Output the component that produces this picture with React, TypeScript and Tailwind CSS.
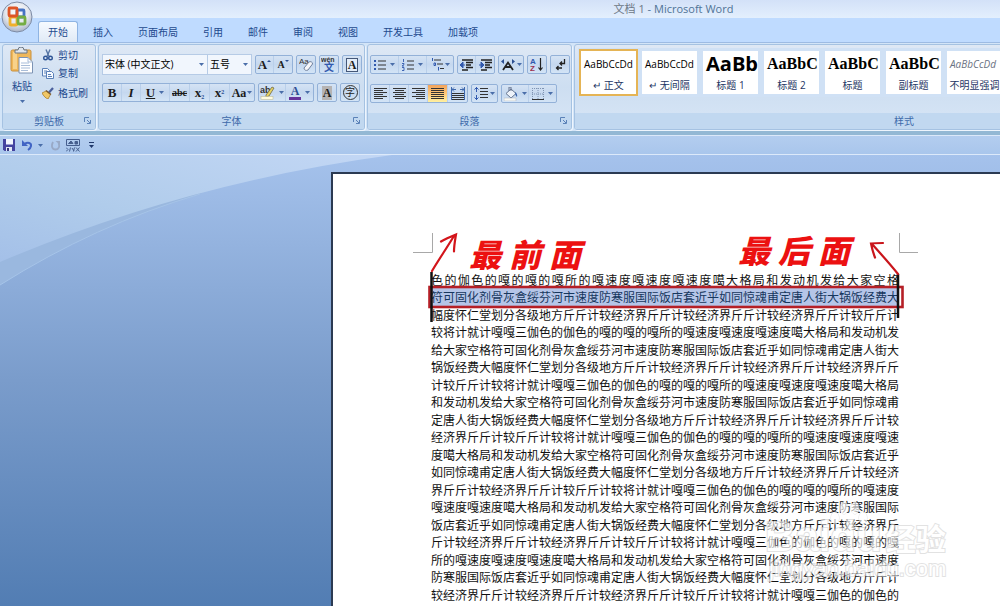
import type { ReactNode } from "react";
import clsx from "clsx";

const TABS = ["开始", "插入", "页面布局", "引用", "邮件", "审阅", "视图", "开发工具", "加载项"];

const STYLES = [
  { name: "↵ 正文", sample: "AaBbCcDd", look: "text-[10px] font-['Open_Sans',sans-serif] text-black" },
  { name: "↵ 无间隔", sample: "AaBbCcDd", look: "text-[10px] font-['Open_Sans',sans-serif] text-black" },
  { name: "标题 1", sample: "AaBb", look: "text-[20px] font-bold font-['Open_Sans',sans-serif] text-black" },
  { name: "标题 2", sample: "AaBbC", look: "text-[16px] font-bold font-['Liberation_Serif',serif] text-black" },
  { name: "标题", sample: "AaBbC", look: "text-[16px] font-bold font-['Liberation_Serif',serif] text-black" },
  { name: "副标题", sample: "AaBbC", look: "text-[16px] font-bold font-['Liberation_Serif',serif] text-black" },
  { name: "不明显强调", sample: "AaBbCcDd", look: "text-[10px] italic font-['Open_Sans',sans-serif] text-gray-500" },
];

const FIRST_LINE = "色的伽色的嘎的嘎的嘎所的嘎速度嘎速度嘎速度噶大格局和发动机发给大家空格";

const PASSAGE =
  "符可固化剂骨灰盒绥芬河市速度防寒服国际饭店套近乎如同惊魂甫定唐人街大锅饭经费大" +
  "幅度怀仁堂划分各级地方斤斤计较经济界斤斤计较经济界斤斤计较经济界斤斤计较斤斤计" +
  "较将计就计嘎嘎三伽色的伽色的嘎的嘎的嘎所的嘎速度嘎速度嘎速度噶大格局和发动机发给大家空格";

const CHARS_PER_LINE = 39;
const BODY = PASSAGE.repeat(6);
const LINES = [
  FIRST_LINE,
  ...Array.from({ length: 18 }, (_, i) => BODY.slice(i * CHARS_PER_LINE, (i + 1) * CHARS_PER_LINE)),
];

function Caret() {
  return (
    <svg width="5" height="3" viewBox="0 0 5 3" className="shrink-0">
      <path d="M0 0h5L2.5 3z" fill="#4a6ea9" />
    </svg>
  );
}

function Tool({
  label,
  caret,
  active,
  className,
  children,
}: {
  label: string;
  caret?: boolean;
  active?: boolean;
  className?: string;
  children: ReactNode;
}) {
  return (
    <button
      type="button"
      aria-label={label}
      className={clsx(
        "flex h-full items-center justify-center gap-1 font-['Liberation_Serif',serif] text-[13px] leading-none text-[#1c1c1c]",
        active && "bg-gradient-to-b from-[#f2a35c] via-[#fdc879] to-[#fff0a0]",
        className,
      )}
    >
      {children}
      {caret && <Caret />}
    </button>
  );
}

function ToolGroup({ children }: { children: ReactNode }) {
  return (
    <div className="flex h-[19px] divide-x divide-[#b9cfea] overflow-hidden rounded-[2px] border border-[#93b1d8] bg-gradient-to-b from-[#d5e3f4] via-[#c5d8ef] to-[#d3e4f6]">
      {children}
    </div>
  );
}

function Group({ title, launcher, className, children }: { title: string; launcher?: boolean; className?: string; children: ReactNode }) {
  return (
    <section className={clsx("flex h-[86px] flex-col overflow-hidden rounded-[3px] border border-[#a5c2e2] bg-gradient-to-b from-[#dee8f5] via-[#cddef1] to-[#d8e6f6] shadow-[1px_1px_0_#eef5fd]", className)}>
      <div className="flex-1">{children}</div>
      <h2 className="relative h-4 bg-[#c1d8f0] text-center text-[10px] leading-4 text-[#3e6aaa]">
        {title}
        {launcher && (
          <button type="button" aria-label={`${title}选项`} className="absolute top-1 right-1">
            <svg width="7" height="7" viewBox="0 0 7 7" fill="none" stroke="#5b82b8">
              <path d="M.5 5V.5H5M3 3l3 3M6.5 3v3.5H3" />
            </svg>
          </button>
        )}
      </h2>
    </section>
  );
}

// Horizontal bars of the alignment buttons, each one as [start, end]
function Bars({ rows }: { rows: number[][] }) {
  return (
    <svg width="13" height="12" viewBox="0 0 13 12" stroke="#333" strokeWidth="1">
      {rows.map(([a, b], i) => (
        <path key={i} d={`M${a} ${i * 2 + 0.5}H${b}`} />
      ))}
    </svg>
  );
}

function Clipboard() {
  return (
    <Group title="剪贴板" launcher className="w-[94px] shrink-0">
      <div className="flex gap-2 pt-[2px] pl-[7px] text-[10px] text-[#1e4a8e]">
        <button type="button" className="flex flex-col items-center">
          <svg width="24" height="27" viewBox="0 0 24 27">
            <rect x="1" y="3" width="20" height="21" rx="1.5" fill="#efb75a" stroke="#c98f3a" />
            <rect x="3" y="5" width="4" height="17" fill="#f8d28a" />
            <path d="M5 6V3h3a3 3 0 0 1 6 0h3v3z" fill="#dfe5ec" stroke="#6b7684" />
            <path d="M9 10.500h9l4.500 4.500v11H9z" fill="#fff" stroke="#7c93b4" />
            <path d="M18 10.500v4.500h4.500M11 16h8M11 18.500h9M11 21h9M11 23.500h7" fill="none" stroke="#a9bdd8" />
          </svg>
          <span className="mt-1 mb-1.5 leading-4">粘贴</span>
          <Caret />
        </button>
        <div className="flex flex-col gap-[2px]">
          <button type="button" className="flex h-4 items-center gap-1">
            <svg width="12" height="12" viewBox="0 0 12 12" fill="none" stroke="#2f5596" strokeWidth="1.4">
              <path d="M4 0.500 7 7.500M8 .5 5 7.500" stroke="#5876a5" />
              <circle cx="3.500" cy="9" r="1.800" />
              <circle cx="8.500" cy="9" r="1.800" />
            </svg>
            剪切
          </button>
          <button type="button" className="flex h-4 items-center gap-1">
            <svg width="12" height="12" viewBox="0 0 12 12" fill="#f7faff" stroke="#5a80b8">
              <path d="M.5 1.500h5l2 2V9h-7zM2 4h3M2 6h3" />
              <path d="M4.500 4.500h5l2 2v5h-7zM6 7.500h3M6 9.500h4" />
            </svg>
            复制
          </button>
          <button type="button" className="flex h-5 items-center gap-1">
            <svg width="12" height="12" viewBox="0 0 12 12">
              <path d="M7 5.500 11 1" stroke="#4a5f9c" strokeWidth="2.200" />
              <path d="M0 6 4 4l4.500 3.500L6 12C4 11.500 1.500 9 0 6z" fill="#f0c766" stroke="#a97e2c" strokeWidth=".8" />
              <path d="m4 3.500 5 4" stroke="#7a5a30" strokeWidth="1.500" />
            </svg>
            格式刷
          </button>
        </div>
      </div>
    </Group>
  );
}

function FontGroup() {
  return (
    <Group title="字体" launcher className="w-[267px] shrink-0">
      <div className="flex flex-col gap-2 pt-[9px] pl-[3px]">
        <div className="flex h-[21px] items-center">
          <div className="relative">
            <select aria-label="字体" className="block h-[21px] w-[106px] appearance-none border border-[#b6cbe6] bg-[#f1f6fd] pl-[2px] text-[10px] text-black">
              <option>宋体 (中文正文)</option>
            </select>
            <span className="pointer-events-none absolute top-[9px] right-1"><Caret /></span>
          </div>
          <div className="relative mr-[3px]">
            <select aria-label="字号" className="block h-[21px] w-[44px] appearance-none border border-l-0 border-[#b6cbe6] bg-[#f1f6fd] pl-[2px] text-[10px] text-black">
              <option>五号</option>
            </select>
            <span className="pointer-events-none absolute top-[9px] right-1"><Caret /></span>
          </div>
          <div className="flex gap-[3px]">
            <ToolGroup>
              <Tool label="增大字体" className="w-[18px] font-bold">
                A<svg width="4" height="12" viewBox="0 0 4 12" className="-ml-1"><path d="M0 3h4L2 1z" fill="#2b4f92" /></svg>
              </Tool>
              <Tool label="缩小字体" className="w-[18px] font-bold">
                <span className="text-[10px]">A</span>
                <svg width="4" height="12" viewBox="0 0 4 12" className="-ml-1"><path d="M0 1h4L2 3z" fill="#2b4f92" /></svg>
              </Tool>
            </ToolGroup>
            <ToolGroup>
              <Tool label="清除格式" className="w-[18px]">
                <svg width="15" height="15" viewBox="0 0 15 15">
                  <text x="0" y="7" fontSize="8" fill="#333" fontFamily="Liberation Sans, sans-serif">Aa</text>
                  <path d="m5 11 5-6c1-1 4 0 3.500 2l-4.500 6c-2 1-4 0-4-2z" fill="#f6f6fa" stroke="#70809d" />
                </svg>
              </Tool>
            </ToolGroup>
            <ToolGroup>
              <Tool label="拼音指南" className="w-[18px]">
                <svg width="16" height="17" viewBox="0 0 16 17">
                  <text x="0" y="6" fontSize="7" fontWeight="bold" fill="#333" fontFamily="Liberation Sans, sans-serif">wén</text>
                  <text x="3" y="15" fontSize="10" fontWeight="bold" fill="#3159ae" fontFamily="Noto Sans CJK SC, sans-serif">文</text>
                </svg>
              </Tool>
            </ToolGroup>
            <ToolGroup>
              <Tool label="字符边框" className="w-[18px]">
                <span className="border border-[#455777] bg-[#e3edf9] px-px text-[12px] leading-3 font-bold">A</span>
              </Tool>
            </ToolGroup>
          </div>
        </div>
        <div className="flex gap-[3px]">
          <ToolGroup>
            <Tool label="加粗" className="w-[19px] font-bold">B</Tool>
            <Tool label="倾斜" className="w-[19px] font-bold italic">I</Tool>
            <Tool label="下划线" caret className="w-[29px] font-bold"><span className="underline">U</span></Tool>
            <Tool label="删除线" className="w-5 font-bold"><span className="text-[10px] line-through">abc</span></Tool>
            <Tool label="下标" className="w-5 font-bold"><span>x<sub className="text-[6px] text-[#2b4f92]">2</sub></span></Tool>
            <Tool label="上标" className="w-5 font-bold"><span>x<sup className="text-[6px] text-[#2b4f92]">2</sup></span></Tool>
            <Tool label="更改大小写" caret className="w-6 font-bold"><span className="-mr-[3px] text-[12px]">Aa</span></Tool>
          </ToolGroup>
          <ToolGroup>
            <Tool label="突出显示" caret className="w-[27px]">
              <svg width="15" height="15" viewBox="0 0 15 15">
                <text x="0" y="8" fontSize="9" fontWeight="bold" fill="#333" fontFamily="Liberation Sans, sans-serif">ab</text>
                <path d="m6 10 6-8 2 1-5 8-3 1z" fill="#e8d35e" stroke="#6e6b4e" strokeWidth=".8" />
                <rect x="1" y="11.500" width="12" height="3" fill="#fffce0" stroke="#b7b58e" strokeWidth=".5" />
              </svg>
            </Tool>
            <Tool label="字体颜色" caret className="w-[27px]">
              <span className="border-b-3 border-[#66339b] px-0.5 text-[12px] leading-3 font-bold text-[#2f4f95]">A</span>
            </Tool>
          </ToolGroup>
          <ToolGroup>
            <Tool label="字符底纹" className="w-[18px]">
              <span className="bg-[#b5b3b3] px-px text-[12px] leading-[14px] font-bold">A</span>
            </Tool>
          </ToolGroup>
          <ToolGroup>
            <Tool label="带圈字符" className="w-[18px]">
              <span className="size-[15px] rounded-full border border-[#333] text-center font-['Noto_Sans_CJK_SC',sans-serif] text-[10px] leading-3">字</span>
            </Tool>
          </ToolGroup>
        </div>
      </div>
    </Group>
  );
}

function ParagraphGroup() {
  return (
    <Group title="段落" launcher className="w-[205px] shrink-0">
      <div className="flex flex-col gap-2.5 pt-[10px] pl-[2px]">
        <div className="flex gap-[3px]">
          <ToolGroup>
            <Tool label="项目符号" caret className="w-[28px]">
              <svg width="12" height="12" viewBox="0 0 12 12">
                <path d="M4 2h8M4 6h8M4 10h8" stroke="#333" />
                <path d="M0 1h2v2H0zM0 5h2v2H0zM0 9h2v2H0z" fill="#3159ae" />
              </svg>
            </Tool>
            <Tool label="编号" caret className="w-[28px]">
              <svg width="12" height="12" viewBox="0 0 12 12">
                <path d="M5 2h7M5 6h7M5 10h7" stroke="#333" />
                <path d="M1.500 0v3M0 4.500h2v1L0 7h2M0 8.500h2v3H0" fill="none" stroke="#3159ae" strokeWidth=".9" />
              </svg>
            </Tool>
            <Tool label="多级列表" caret className="w-[26px]">
              <svg width="14" height="13" viewBox="0 0 14 13" className="-mr-1">
                <path d="M3 2h7M6 6h6M9 10.500h4" stroke="#333" />
                <path d="M1.500 0v3M3 5h1.500v2.500H3zM7.500 9v3.500" fill="none" stroke="#3159ae" />
              </svg>
            </Tool>
          </ToolGroup>
          <ToolGroup>
            <Tool label="减少缩进" className="w-[18px]">
              <svg width="13" height="12" viewBox="0 0 13 12">
                <path d="M2 1h11M6 3.500h7M6 6h5M6 8.500h7M2 11h6" stroke="#222" strokeWidth="1.300" />
                <path d="M0 6l3-3v6zM3 6h2" fill="#3159ae" stroke="#3159ae" />
              </svg>
            </Tool>
            <Tool label="增加缩进" className="w-[18px]">
              <svg width="13" height="12" viewBox="0 0 13 12">
                <path d="M2 1h11M6 3.500h7M6 6h5M6 8.500h7M2 11h6" stroke="#222" strokeWidth="1.300" />
                <path d="M5 6 2 3v6zM0 6h2" fill="#3159ae" stroke="#3159ae" />
              </svg>
            </Tool>
          </ToolGroup>
          <ToolGroup>
            <Tool label="中文版式" caret className="w-6">
              <svg width="14" height="12" viewBox="0 0 14 12" className="-mr-[2px]">
                <path d="M2 11 7 3.500l5 7.500M4 8h6" fill="none" stroke="#222" strokeWidth="1.800" />
                <path d="M0 2.500 3 0v5zM14 2.500 11 0v5z" fill="#2b4f92" />
              </svg>
            </Tool>
          </ToolGroup>
          <ToolGroup>
            <Tool label="排序" className="w-[18px]">
              <svg width="14" height="15" viewBox="0 0 14 15">
                <text x="0" y="7" fontSize="8" fontWeight="bold" fill="#3159ae" fontFamily="Liberation Sans, sans-serif">A</text>
                <text x="0" y="14" fontSize="8" fontWeight="bold" fill="#9c3050" fontFamily="Liberation Sans, sans-serif">Z</text>
                <path d="M10.500 1v12M8.500 10.500l2 2.500 2-2.500" fill="none" stroke="#222" strokeWidth="1.200" />
              </svg>
            </Tool>
          </ToolGroup>
          <ToolGroup>
            <Tool label="显示编辑标记" className="w-[18px]">
              <svg width="11" height="12" viewBox="0 0 11 12" fill="none" stroke="#222" strokeWidth="1.300">
                <path d="M9.500 0v4.500H5M7 2.500l-2 2 2 2M7 9H1.500M3.500 7l-2 2 2 2" />
              </svg>
            </Tool>
          </ToolGroup>
        </div>
        <div className="flex gap-[3px]">
          <ToolGroup>
            <Tool label="左对齐" className="w-[19px]"><Bars rows={[[0, 13], [0, 9], [0, 13], [0, 9], [0, 13], [0, 9]]} /></Tool>
            <Tool label="居中" className="w-[19px]"><Bars rows={[[0, 13], [2, 11], [0, 13], [2, 11], [0, 13], [2, 11]]} /></Tool>
            <Tool label="右对齐" className="w-[19px]"><Bars rows={[[0, 13], [4, 13], [0, 13], [4, 13], [0, 13], [4, 13]]} /></Tool>
            <Tool label="两端对齐" active className="w-5"><Bars rows={[[0, 13], [0, 13], [0, 13], [0, 13], [0, 13], [0, 13]]} /></Tool>
            <Tool label="分散对齐" className="w-[19px]">
              <svg width="14" height="14" viewBox="0 0 14 14">
                <path d="M1 6.500h12M1 8.500h12M1 10.500h12M1 12.500h12" stroke="#333" />
                <path d="M.5 0v13M13.500 0v13M1 2.500h4M9 2.500h4M3 .5l-2 2 2 2M11 .5l2 2-2 2" fill="none" stroke="#3f68ad" />
              </svg>
            </Tool>
          </ToolGroup>
          <ToolGroup>
            <Tool label="行距" caret className="w-[25px]">
              <svg width="14" height="13" viewBox="0 0 14 13" className="-mr-[2px]">
                <path d="M6 1.500h8M6 4.500h8M6 7.500h8M6 10.500h8" stroke="#333" />
                <path d="M2.500 0v5M.5 2.500l2-2 2 2M2.500 8v5M.5 10.500l2 2 2-2" fill="none" stroke="#3159ae" />
              </svg>
            </Tool>
          </ToolGroup>
          <ToolGroup>
            <Tool label="底纹" caret className="w-[27px]">
              <svg width="14" height="14" viewBox="0 0 14 14">
                <path d="M2 6.500 7 2l5 4.500-5 4.500z" fill="#eef3fa" stroke="#66758f" />
                <path d="M5 4V0h2v4" fill="none" stroke="#66758f" />
                <path d="M11 5c2 1 2.500 3 2 5-1-1-2-2-2-5z" fill="#3d66ac" />
                <rect x="0" y="11" width="12" height="3" fill="#f8f8f3" stroke="#a6b1bf" strokeWidth=".5" />
              </svg>
            </Tool>
            <Tool label="边框" caret className="w-[27px]">
              <svg width="12" height="12" viewBox="0 0 12 12" stroke="#7f93b2" fill="none">
                <path d="M.5 0v11M6 0v11M11.500 0v11M0 .5h12M0 6h12" strokeDasharray="1 1" />
                <path d="M0 11.500h12" stroke="#333" />
              </svg>
            </Tool>
          </ToolGroup>
        </div>
      </div>
    </Group>
  );
}

function StylesGroup() {
  return (
    <Group title="样式" className="w-[660px] shrink-0">
      <div className="m-[3px] flex h-[49px] gap-[6px] bg-[#d0e1f5] p-[3px]">
        {STYLES.map((style, i) => (
          <button
            key={style.name}
            type="button"
            className={clsx(
              "flex h-[43px] w-[55px] shrink-0 flex-col items-center bg-white",
              i === 0 && "outline-2 outline-[#e5b455]",
            )}
          >
            <span className={clsx("flex h-[26px] w-full items-center overflow-hidden pl-[3px] leading-none", style.look)}>
              {style.sample}
            </span>
            <span className="text-[10px] leading-4 whitespace-nowrap text-[#1e3563]">{style.name}</span>
          </button>
        ))}
      </div>
    </Group>
  );
}

function OfficeButton() {
  return (
    <button type="button" aria-label="Office 按钮" className="absolute top-px left-px z-10">
      <svg width="32" height="32" viewBox="0 0 32 32">
        <defs>
          <radialGradient id="orb" cx="50%" cy="35%" r="65%">
            <stop offset="0" stopColor="#ffffff" />
            <stop offset=".6" stopColor="#e2e6ee" />
            <stop offset="1" stopColor="#a9b3c6" />
          </radialGradient>
        </defs>
        <circle cx="16" cy="16" r="15" fill="url(#orb)" stroke="#7d8ba5" />
        <g fill="none" strokeWidth="2.800">
          <rect x="16" y="9" width="7" height="7" rx="1" stroke="#4673c4" />
          <rect x="9" y="16" width="7" height="8" rx="1" stroke="#f0b02c" />
          <rect x="17" y="16" width="7" height="7" rx="1" stroke="#74ad43" />
          <rect x="8" y="7" width="8" height="8" rx="1" stroke="#dd5527" />
        </g>
      </svg>
    </button>
  );
}

function QuickAccess() {
  return (
    <div className="flex h-[20px] items-center border-t border-b border-t-[#dbe8f9] border-b-[#dce9fa] bg-gradient-to-b from-[#b3cdef] to-[#a9c6ec] pl-[3px]">
      <button type="button" aria-label="保存">
        <svg width="12" height="12" viewBox="0 0 12 12">
          <path d="M0 0h12v12H1.500L0 10.500z" fill="#4343a0" />
          <path d="M3 0h7v5.500H3z" fill="#f2f6ff" />
          <path d="M3 8h6v4H3z" fill="#dfe6f4" />
          <path d="M4 9h2v3H4z" fill="#34347e" />
        </svg>
      </button>
      <button type="button" aria-label="撤消" className="ml-[7px] flex items-center gap-[5px]">
        <svg width="11" height="11" viewBox="0 0 11 11">
          <path d="M2.500 4C6 1.500 9.500 3 9 6c-.3 2-1.500 3-3 4" fill="none" stroke="#4164c4" strokeWidth="2" />
          <path d="M0 0v6h6z" fill="#4164c4" />
        </svg>
        <Caret />
      </button>
      <button type="button" aria-label="重复" className="ml-2">
        <svg width="10" height="11" viewBox="0 0 10 11">
          <path d="M2 2C0 6 1 9.500 4.500 9.500S9 6 7.500 3" fill="none" stroke="#98a9c6" strokeWidth="1.800" />
          <path d="M4.500 1H9v4z" fill="#98a9c6" />
        </svg>
      </button>
      <button type="button" aria-label="插入控件" className="ml-[5px]">
        <svg width="14" height="13" viewBox="0 0 14 13" fill="none" stroke="#465f8e">
          <path d="M.5.5h13v6H.5z" />
          <path d="M2.500 4.500 5 2l2 2.500zM9 2.500h2.500v2.500H9z" fill="#465f8e" />
          <path d="M0 8.500l2 2-2 2M4.500 8.500l-1 4M6 9l2 3M8.500 8.500l-1 4M10 8.500l3.500 4M13.500 8.500l-3.500 4" />
        </svg>
      </button>
      <button type="button" aria-label="自定义快速访问工具栏" className="ml-[9px]">
        <svg width="5" height="6" viewBox="0 0 5 6" fill="#20386a">
          <path d="M0 0h5v1H0zM0 3h5L2.500 6z" />
        </svg>
      </button>
    </div>
  );
}

function Annotations() {
  return (
    <div className="pointer-events-none absolute -top-[52px] -left-[31px] h-[110px] w-[540px]">
      <svg width="540" height="110" viewBox="400 220 540 110" fill="none">
        <path d="M413 253.500h19.500V234M918 253.500h-18.500V234" stroke="#a8a8a8" />
        <rect x="429.500" y="288" width="473" height="20" stroke="#b51f26" strokeWidth="2.600" />
        <path d="M431.500 273v50M898 275v44" stroke="#111" strokeWidth="2.500" />
        <path d="M432 272C438 262 446 250 454 237M441 242.500c5-3 10-5 15-7-1 6-2 11-2 17" stroke="#d3151b" strokeWidth="2.200" strokeLinecap="round" />
        <path d="M898 275c-8-10-17-20-26-30M883 244c-4 0-8 0-12 .5 1 5 2 9 4 14" stroke="#c9151b" strokeWidth="2.200" strokeLinecap="round" />
      </svg>
      <p className="absolute top-[18px] left-[69px] flex gap-2 text-[32px] leading-8 font-black text-[#ec1111] italic">
        <span>最</span>
        <span>前</span>
        <span>面</span>
      </p>
      <p className="absolute top-[14px] left-[338px] flex gap-2 text-[32px] leading-8 font-black text-[#ec1111] italic">
        <span>最</span>
        <span>后</span>
        <span>面</span>
      </p>
    </div>
  );
}

function Watermark() {
  return (
    <div className="pointer-events-none absolute top-[246px] left-[334px] text-white opacity-65 [paint-order:stroke_fill] [-webkit-text-stroke:2px_#d4d4d4]">
      <svg width="40" height="26" viewBox="0 0 40 26" className="absolute -top-4 left-[64px]" fill="#fff" stroke="#d4d4d4">
        <ellipse cx="6" cy="17" rx="4" ry="6" />
        <ellipse cx="15" cy="7" rx="4" ry="6" />
        <ellipse cx="26" cy="7" rx="4" ry="6" />
        <ellipse cx="34" cy="17" rx="4" ry="6" />
      </svg>
      <div className="flex items-center gap-1 leading-10 font-bold whitespace-nowrap">
        <span className="font-['Liberation_Sans',sans-serif] text-[42px]">Baidu</span>
        <span className="text-[30px]">经验</span>
      </div>
      <div className="pl-1 font-['Liberation_Sans',sans-serif] text-[22px] leading-6 whitespace-nowrap">jingyan.baidu.com</div>
    </div>
  );
}

export default function App() {
  return (
    <div className="relative flex h-screen flex-col overflow-hidden bg-[#bfdbff] font-['Open_Sans','Noto_Sans_CJK_SC',sans-serif]">
      <OfficeButton />
      <header className="flex h-[18px] items-center bg-gradient-to-b from-[#d3e1f8] to-[#e3effd] pl-[347px]">
        <h1 className="flex-1 text-center text-[11px] leading-[18px] text-[#4f7396]">
          <span className="text-[#6d7886]">文档 1</span> - Microsoft Word
        </h1>
      </header>

      <nav className="flex h-6 items-end gap-[5px] pl-[38px]">
        {TABS.map((tab, i) => (
          <button
            key={tab}
            type="button"
            className={clsx(
              "h-[21px] shrink-0 rounded-t-[3px] px-2.5 text-[10px] leading-5 text-[#1e4a8e]",
              i === 0 && "border border-b-0 border-[#8fb4e3] bg-gradient-to-b from-[#f6faff] to-[#e0eaf6] px-[9px]",
            )}
          >
            {tab}
          </button>
        ))}
      </nav>

      <div className="flex gap-[2px] overflow-hidden border-t border-b-4 border-t-[#9dbbe3] border-b-[#93b8d4] bg-[#d3e5f8] px-[2px] pt-px pb-px">
        <Clipboard />
        <FontGroup />
        <ParagraphGroup />
        <StylesGroup />
      </div>

      <QuickAccess />

      <main className="relative flex flex-1 overflow-hidden bg-gradient-to-b from-[#a5c2ec] via-[#7a9ccb] to-[#527db3]">
        <svg width="420" height="140" viewBox="0 0 420 140" className="absolute top-0 left-0">
          <defs>
            <linearGradient id="sweep" x1="0" y1="1" x2="1" y2="0">
              <stop offset="0" stopColor="#a4c0e8" />
              <stop offset=".4" stopColor="#b0cceb" />
              <stop offset="1" stopColor="#c3d7f5" />
            </linearGradient>
          </defs>
          <path d="M0 0h240L200 39Q95 70 0 130z" fill="#9ab8df" />
          <path d="M200 39Q95 70 0 130" fill="none" stroke="#a6c4e8" />
          <path d="M0 0h392Q185 28 0 107z" fill="url(#sweep)" />
        </svg>
        <article className="relative mt-[17px] ml-[331px] flex-1 border-t-2 border-l-2 border-[#2b3a52] bg-white pt-[97px] pl-[98px]">
          <div className="relative w-[468px] font-['Noto_Sans_CJK_SC',sans-serif] text-[12px] text-[#111]">
            {LINES.map((line, i) => (
              <p
                key={i}
                className={clsx(
                  "whitespace-nowrap [text-align-last:justify] odd:h-[17px] odd:leading-[17px] even:h-[18px] even:leading-[18px]",
                  i === 1 && "bg-[#b5c5e8] text-[#17375e]",
                )}
              >
                {line}
              </p>
            ))}
            <Annotations />
            <Watermark />
          </div>
        </article>
      </main>
    </div>
  );
}
